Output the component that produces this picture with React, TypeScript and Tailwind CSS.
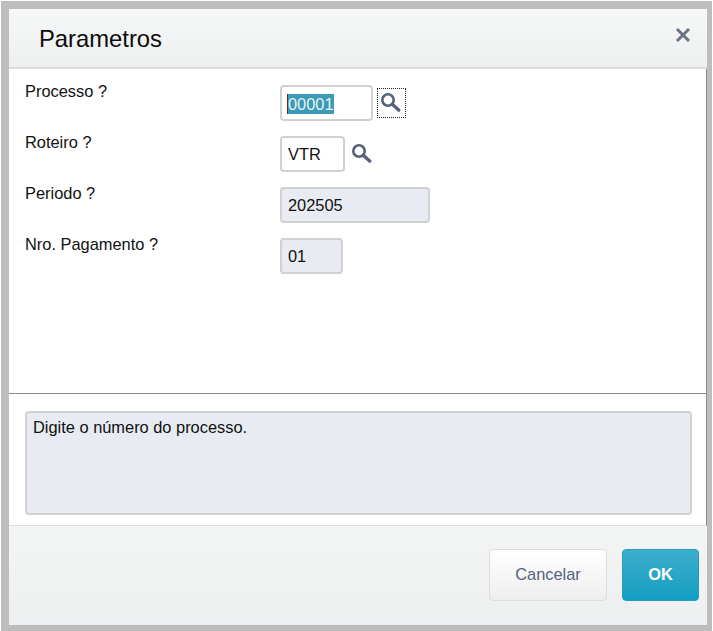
import * as React from "react";

function SearchIcon(): React.JSX.Element {
  return (
    <svg width="20" height="20" viewBox="0 0 20 20" fill="none" className="block">
      <circle cx="7" cy="7" r="5.7" stroke="#56627a" strokeWidth="2.6" />
      <path d="M11.5 11.5l6.2 5.6" stroke="#56627a" strokeWidth="3.4" strokeLinecap="round" />
    </svg>
  );
}

const ROW_CLASS = "flex h-[51px] items-start";
const LABEL_CLASS = "w-[255px] text-[16.4px] leading-[20px] text-[#111]";
const INPUT_CLASS = "mt-1 flex h-9 items-center rounded border-2 border-[#d0d2d2] pl-[6px] pt-px text-[16.4px] text-[#111]";

export default function App(): React.JSX.Element {
  return (
    <div className="h-[631px] w-[713px] bg-white pl-px pt-px font-['Liberation_Sans',Arial,sans-serif]">
      <div className="flex h-[630px] w-[711px] flex-col border-[8px] border-r-[5px] border-b-[6px] border-[#bdbdbd]">
        {/* Header */}
        <div className="flex h-[60px] shrink-0 items-center justify-between border-b-2 border-[#dcdde0] bg-gradient-to-b from-[#f6f7f7] to-[#eeeff0] pl-[30px] pr-4">
          <h1 className="pt-[2px] text-[23.8px] leading-[28px] text-[#0c0c0c]">Parametros</h1>
          <svg width="16" height="16" viewBox="0 0 16 16" className="mb-[6px]">
            <path d="M2 2l12 12M14 2L2 14" stroke="#6b7385" strokeWidth="3" />
          </svg>
        </div>

        {/* Form */}
        <div className="h-[325px] shrink-0 border-b border-r border-[#8a8a8a] bg-white pl-4 pt-[12px]">
          <div className={ROW_CLASS}>
            <label className={LABEL_CLASS}>Processo ?</label>
            <div className={`${INPUT_CLASS} w-[93px] bg-white`}>
              <span className="-ml-px border-l border-[#7a1f10] bg-[#3b9ab5] leading-[20px] text-[#e6f2f5]">00001</span>
            </div>
            <div className="ml-1 mt-[7px] flex h-[30px] w-[29px] items-center justify-center border border-dotted border-[#222] pr-[2px]">
              <SearchIcon />
            </div>
          </div>
          <div className={ROW_CLASS}>
            <label className={LABEL_CLASS}>Roteiro ?</label>
            <div className={`${INPUT_CLASS} w-[65px] bg-white`}>VTR</div>
            <div className="ml-[7px] mt-[12px]">
              <SearchIcon />
            </div>
          </div>
          <div className={ROW_CLASS}>
            <label className={LABEL_CLASS}>Periodo ?</label>
            <div className={`${INPUT_CLASS} w-[150px] bg-[#e8ebf2]`}>202505</div>
          </div>
          <div className={ROW_CLASS}>
            <label className={LABEL_CLASS}>Nro. Pagamento ?</label>
            <div className={`${INPUT_CLASS} w-[63px] bg-[#e8ebf2]`}>01</div>
          </div>
        </div>

        {/* Help text */}
        <div className="h-[132px] shrink-0 border-b border-r border-[#dcdddd] border-r-[#8a8a8a] bg-white px-4 pt-[17px]">
          <div className="h-[104px] w-[667px] rounded border-2 border-[#d0d2d2] bg-[#e8ebf2] pl-[6px] pt-[2px] text-[16.4px] leading-[24px] text-[#111]">
            Digite o número do processo.
          </div>
        </div>

        {/* Footer */}
        <div className="flex flex-1 items-start justify-end gap-[15px] bg-gradient-to-b from-[#f3f4f4] to-[#eeeff0] pr-2 pt-[23px]">
          <button className="h-[52px] w-[118px] rounded border border-[#dcdddd] bg-gradient-to-b from-white to-[#eeeeee] pb-px text-[16.4px] text-[#56627a]">
            Cancelar
          </button>
          <button className="h-[52px] w-[77px] rounded border border-[#2b9ab8] bg-gradient-to-b from-[#3baecb] to-[#0f9ec2] pb-px text-[16.4px] font-bold text-white">
            OK
          </button>
        </div>
      </div>
    </div>
  );
}
